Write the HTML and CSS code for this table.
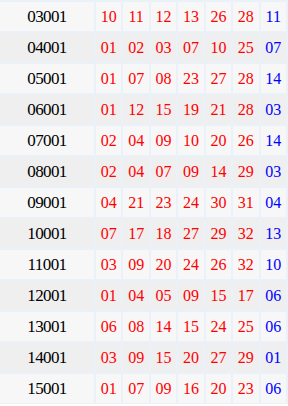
FILE: index.html
```html
<!DOCTYPE html>
<html>
<head>
<meta charset="utf-8">
<link rel="stylesheet" href="styles.css">
</head>
<body>
<div class="table">
  <div class="row"><div class="issue">03001</div><div class="r">10</div><div class="r">11</div><div class="r">12</div><div class="r">13</div><div class="r">26</div><div class="r">28</div><div class="b">11</div></div>
  <div class="row alt"><div class="issue">04001</div><div class="r">01</div><div class="r">02</div><div class="r">03</div><div class="r">07</div><div class="r">10</div><div class="r">25</div><div class="b">07</div></div>
  <div class="row"><div class="issue">05001</div><div class="r">01</div><div class="r">07</div><div class="r">08</div><div class="r">23</div><div class="r">27</div><div class="r">28</div><div class="b">14</div></div>
  <div class="row alt"><div class="issue">06001</div><div class="r">01</div><div class="r">12</div><div class="r">15</div><div class="r">19</div><div class="r">21</div><div class="r">28</div><div class="b">03</div></div>
  <div class="row"><div class="issue">07001</div><div class="r">02</div><div class="r">04</div><div class="r">09</div><div class="r">10</div><div class="r">20</div><div class="r">26</div><div class="b">14</div></div>
  <div class="row alt"><div class="issue">08001</div><div class="r">02</div><div class="r">04</div><div class="r">07</div><div class="r">09</div><div class="r">14</div><div class="r">29</div><div class="b">03</div></div>
  <div class="row"><div class="issue">09001</div><div class="r">04</div><div class="r">21</div><div class="r">23</div><div class="r">24</div><div class="r">30</div><div class="r">31</div><div class="b">04</div></div>
  <div class="row alt"><div class="issue">10001</div><div class="r">07</div><div class="r">17</div><div class="r">18</div><div class="r">27</div><div class="r">29</div><div class="r">32</div><div class="b">13</div></div>
  <div class="row"><div class="issue">11001</div><div class="r">03</div><div class="r">09</div><div class="r">20</div><div class="r">24</div><div class="r">26</div><div class="r">32</div><div class="b">10</div></div>
  <div class="row alt"><div class="issue">12001</div><div class="r">01</div><div class="r">04</div><div class="r">05</div><div class="r">09</div><div class="r">15</div><div class="r">17</div><div class="b">06</div></div>
  <div class="row"><div class="issue">13001</div><div class="r">06</div><div class="r">08</div><div class="r">14</div><div class="r">15</div><div class="r">24</div><div class="r">25</div><div class="b">06</div></div>
  <div class="row alt"><div class="issue">14001</div><div class="r">03</div><div class="r">09</div><div class="r">15</div><div class="r">20</div><div class="r">27</div><div class="r">29</div><div class="b">01</div></div>
  <div class="row"><div class="issue">15001</div><div class="r">01</div><div class="r">07</div><div class="r">09</div><div class="r">16</div><div class="r">20</div><div class="r">23</div><div class="b">06</div></div>
</div>
</body>
</html>
```
FILE: styles.css
```css
html, body {
  margin: 0;
  padding: 0;
  background: #ffffff;
}
.table {
  width: 288px;
  box-sizing: border-box;
  padding: 2px 2px 1px 0;
  display: flex;
  flex-direction: column;
  gap: 2px;
  background: #eaf1f9;
  font-family: "Liberation Serif", "DejaVu Serif", serif;
  font-size: 16px;
}
.row {
  display: grid;
  grid-template-columns: 94px repeat(7, 1fr);
  column-gap: 2px;
  height: 29px;
}
.row > div {
  background: #f7f7f7;
  display: flex;
  align-items: center;
  justify-content: center;
}
.row.alt > div {
  background: #efefef;
}
.issue {
  color: #000000;
  font-size: 17px;
  letter-spacing: -0.6px;
}
.r {
  color: #ff0000;
}
.b {
  color: #0000ff;
}
```
